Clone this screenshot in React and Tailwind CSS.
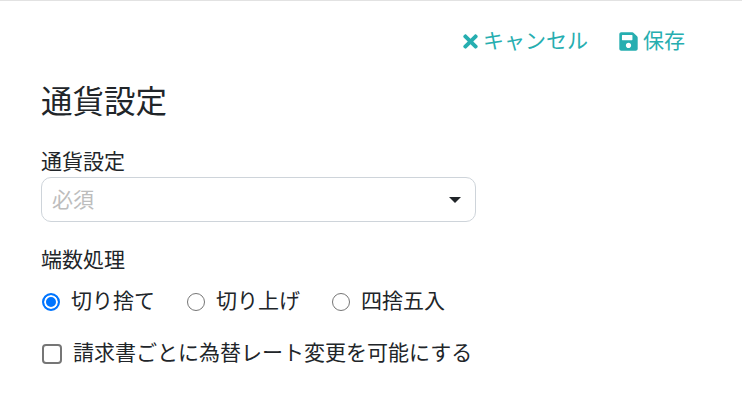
import React from "react";
import { FaTimes, FaSave } from "react-icons/fa";

function Radio({ label, checked }) {
  return (
    <label className="flex items-center gap-[11px]">
      <input type="radio" name="r" defaultChecked={checked} className="appearance-none m-0 w-[18px] h-[18px] rounded-full border-[1.5px] border-[#767676] checked:border-[#0075ff] checked:border-[2px] checked:bg-[#0075ff] checked:shadow-[inset_0_0_0_2px_#fff]" />
      <span>{label}</span>
    </label>
  );
}

export default function App() {
  return (
    <div className="w-[742px] h-[418px] bg-white border-t border-[#e2e2e2] px-[41px] text-[#212529] text-[21px] leading-[31px] font-['Roboto','Noto_Sans_CJK_JP',sans-serif] overflow-hidden">
      <div className="flex justify-end gap-[31px] pt-[25px] pr-[16px] text-[#26aeb0]">
        <button className="flex items-center gap-[4px]"><FaTimes className="w-[17px] h-[21px]" />キャンセル</button>
        <button className="flex items-center gap-[5px]"><FaSave className="w-[19px] h-[21px]" />保存</button>
      </div>
      <h1 className="text-[31.5px] leading-[37px] mt-[27px] font-normal">通貨設定</h1>
      <div className="mt-[29px] leading-[25px]">通貨設定</div>
      <div className="w-[435px] h-[45px] mt-[2px] rounded-[10px] border border-[#ced4da] flex items-center justify-between pl-[10px] pr-[14px] text-[#bdbdbd]">
        <span className="pt-[2px]">必須</span>
        <span className="w-0 h-0 border-x-[6.5px] border-x-transparent border-t-[6.5px] border-t-[#212529]" />
      </div>
      <div className="mt-[26px] leading-[25px]">端数処理</div>
      <div className="flex gap-[32px] mt-[13px] ml-[1px]">
        <Radio label="切り捨て" checked />
        <Radio label="切り上げ" />
        <Radio label="四捨五入" />
      </div>
      <label className="flex items-center gap-[11px] mt-[21px]">
        <input type="checkbox" className="appearance-none m-0 ml-[1px] w-[20px] h-[20px] rounded-[4px] border-2 border-[#767676]" />
        <span>請求書ごとに為替レート変更を可能にする</span>
      </label>
    </div>
  );
}
